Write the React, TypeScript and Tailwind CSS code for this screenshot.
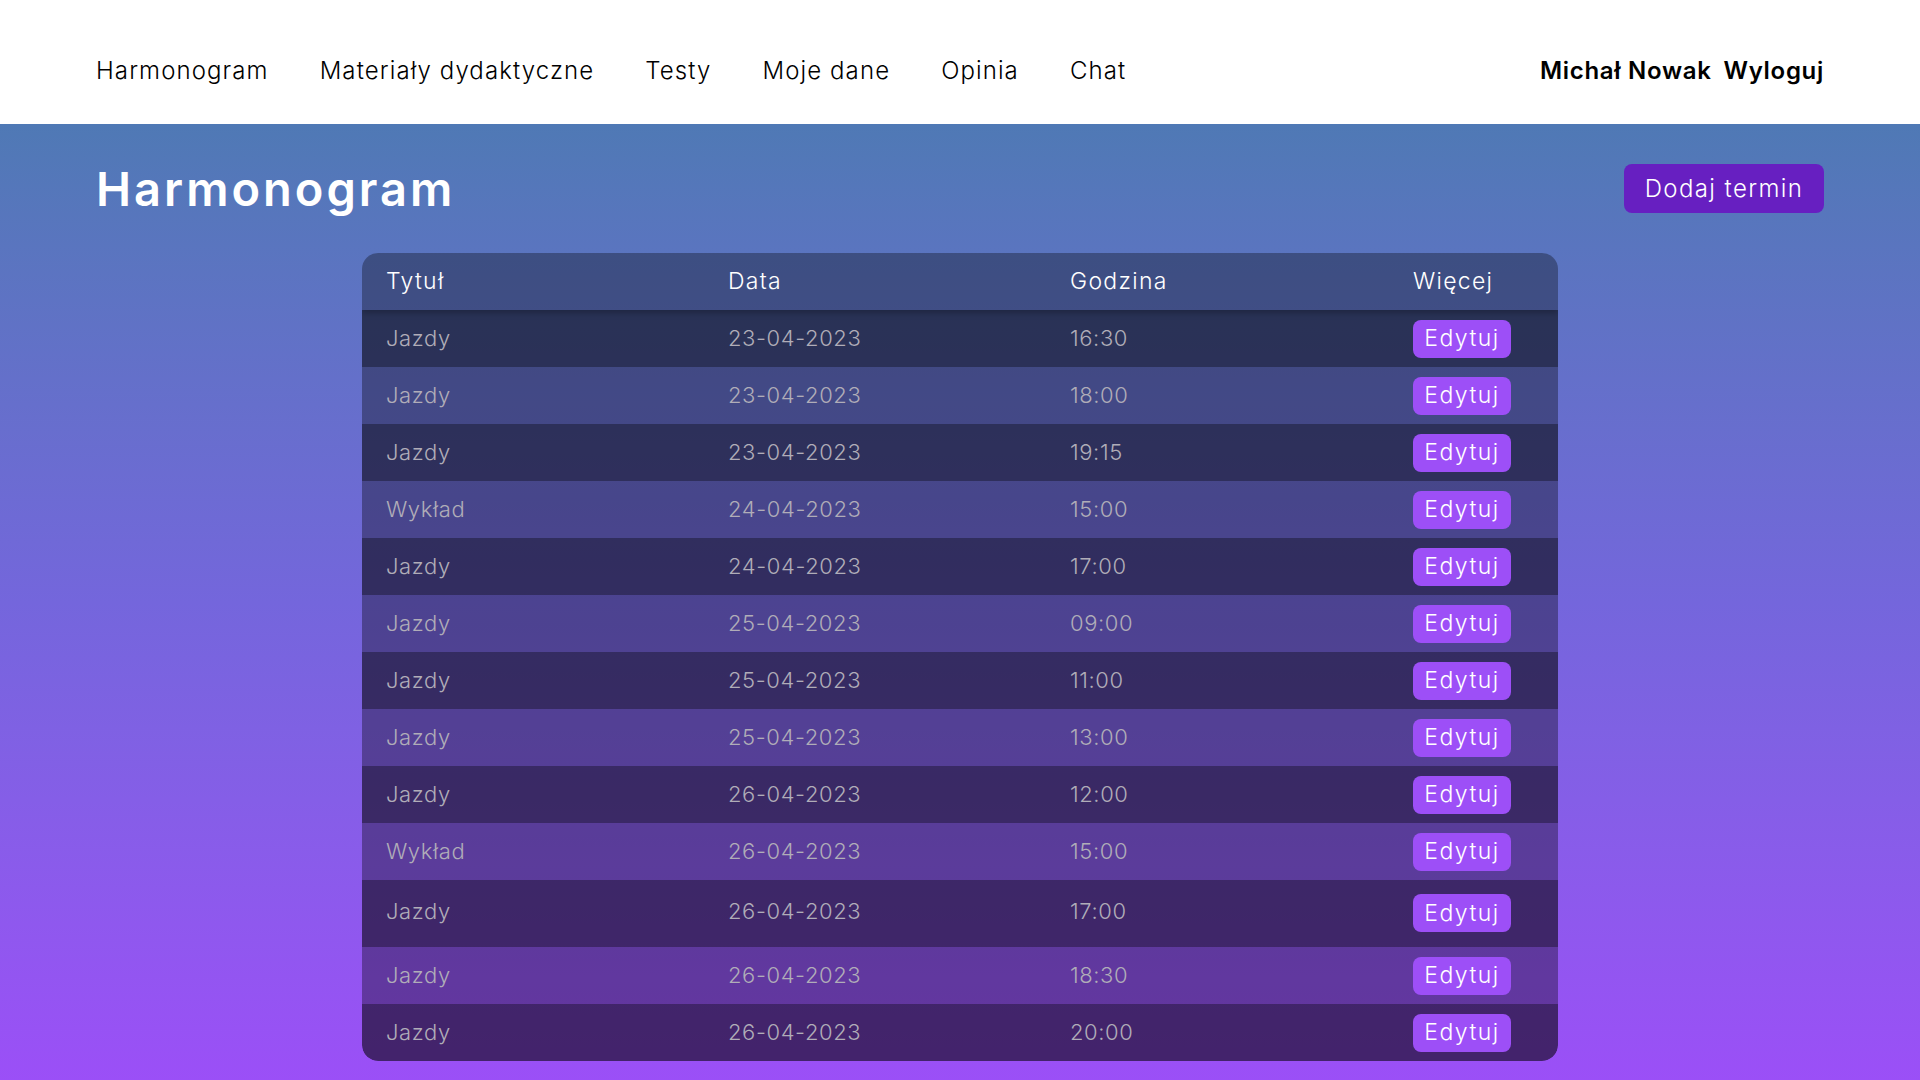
import React from "react";

const navItems = ["Harmonogram", "Materiały dydaktyczne", "Testy", "Moje dane", "Opinia", "Chat"];

const rows = [
  { title: "Jazdy", date: "23-04-2023", time: "16:30" },
  { title: "Jazdy", date: "23-04-2023", time: "18:00" },
  { title: "Jazdy", date: "23-04-2023", time: "19:15" },
  { title: "Wykład", date: "24-04-2023", time: "15:00" },
  { title: "Jazdy", date: "24-04-2023", time: "17:00" },
  { title: "Jazdy", date: "25-04-2023", time: "09:00" },
  { title: "Jazdy", date: "25-04-2023", time: "11:00" },
  { title: "Jazdy", date: "25-04-2023", time: "13:00" },
  { title: "Jazdy", date: "26-04-2023", time: "12:00" },
  { title: "Wykład", date: "26-04-2023", time: "15:00" },
  { title: "Jazdy", date: "26-04-2023", time: "17:00", tall: true },
  { title: "Jazdy", date: "26-04-2023", time: "18:30" },
  { title: "Jazdy", date: "26-04-2023", time: "20:00" },
];

const font = { fontFamily: "Inter, 'Noto Sans', sans-serif" };

function Header() {
  return (
    <header className="h-[124px] bg-white flex items-center justify-between px-24 pt-[18px]">
      <nav className="flex items-center gap-[51px]">
        {navItems.map((n) => (
          <a key={n} className="text-[24px] font-light text-black tracking-[1.1px] cursor-pointer">
            {n}
          </a>
        ))}
      </nav>
      <div className="flex items-center gap-3 text-[24px] font-semibold text-black tracking-[0.7px]">
        <span>Michał Nowak</span>
        <span className="cursor-pointer">Wyloguj</span>
      </div>
    </header>
  );
}

function Row({ r, i }: { r: (typeof rows)[number]; i: number }) {
  const bg = i % 2 === 0 ? "bg-black/[0.56]" : "bg-black/[0.34]";
  return (
    <div
      className={`grid grid-cols-[342px_342px_343px_1fr] pl-6 text-[22px] font-light tracking-[0.6px] text-[#b0adb8] ${bg} ${
        r.tall ? "h-[67px] items-start" : "h-[57px] items-center"
      } ${i === rows.length - 1 ? "rounded-b-2xl" : ""}`}
    >
      <div className={r.tall ? "pt-[15px]" : ""}>{r.title}</div>
      <div className={r.tall ? "pt-[15px]" : ""}>{r.date}</div>
      <div className={r.tall ? "pt-[15px]" : ""}>{r.time}</div>
      <div className={r.tall ? "pt-[14px]" : ""}>
        <button className="h-[38px] w-[98px] rounded-lg bg-[#9d4ff7] text-white text-[23px] font-light tracking-[1.5px]">
          Edytuj
        </button>
      </div>
    </div>
  );
}

export default function App() {
  return (
    <div style={font} className="min-h-screen">
      <Header />
      <main className="min-h-[956px] bg-gradient-to-b from-[#4f79b5] via-[#7466dc] to-[#9b4ff7] px-24 pt-10 pb-5">
        <div className="flex items-center justify-between h-[49px]">
          <h1 className="text-[47px] font-semibold text-white leading-none tracking-[3px]">Harmonogram</h1>
          <button className="h-[49px] w-[200px] rounded-lg bg-[#671fc1] text-white text-[24px] font-light tracking-[1.4px]">
            Dodaj termin
          </button>
        </div>
        <div className="mt-10 w-[1196px] mx-auto rounded-2xl overflow-hidden">
          <div className="grid grid-cols-[342px_342px_343px_1fr] pl-6 h-[57px] items-center bg-black/[0.32] text-white text-[23px] font-light tracking-[1.3px] shadow-[0_3px_6px_rgba(0,0,0,0.25)] relative z-10">
            <div>Tytuł</div>
            <div>Data</div>
            <div>Godzina</div>
            <div>Więcej</div>
          </div>
          {rows.map((r, i) => (
            <Row key={i} r={r} i={i} />
          ))}
        </div>
      </main>
    </div>
  );
}
